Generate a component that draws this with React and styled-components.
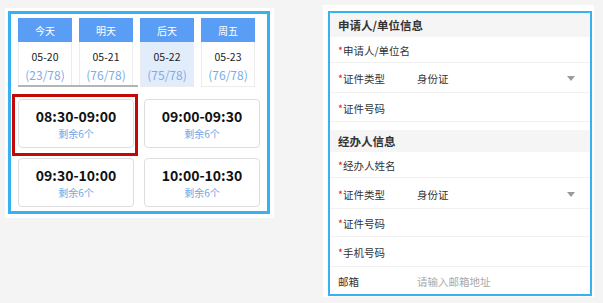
import styled, { createGlobalStyle } from "styled-components";

const GlobalStyle = createGlobalStyle`
  html, body {
    margin: 0;
    background: #f4f4f4;
    font-family: "Noto Sans CJK SC", "Noto Sans", sans-serif;
  }
`;

const days = [
  { label: "今天", date: "05-20", count: "(23/78)" },
  { label: "明天", date: "05-21", count: "(76/78)" },
  { label: "后天", date: "05-22", count: "(75/78)", active: true },
  { label: "周五", date: "05-23", count: "(76/78)" },
];

const slots = [
  { time: "08:30-09:00", left: 6, picked: true },
  { time: "09:00-09:30", left: 6 },
  { time: "09:30-10:00", left: 6 },
  { time: "10:00-10:30", left: 6 },
];

export default function App() {
  return (
    <Page>
      <GlobalStyle />
      <LeftCard>
        <Frame $w={262} $h={203} $bw={3}>
          <Booking>
            <TabsStrip>
              {days.map((d) => (
                <DayTab key={d.date}>
                  <DayHead>{d.label}</DayHead>
                  <DayBody $active={d.active}>
                    <DayDate>{d.date}</DayDate>
                    <DayCount>{d.count}</DayCount>
                  </DayBody>
                </DayTab>
              ))}
              <ScrollThumb />
            </TabsStrip>
            <SlotGrid>
              {slots.map((s) => (
                <Slot key={s.time} $picked={s.picked}>
                  <SlotTime>{s.time}</SlotTime>
                  <SlotLeft>剩余{s.left}个</SlotLeft>
                </Slot>
              ))}
            </SlotGrid>
          </Booking>
        </Frame>
      </LeftCard>

      <RightCard>
        <Frame $w={264} $h={285} $bw={2}>
          <SectionHead $h={24}>申请人/单位信息</SectionHead>
          <Row $h={26}>
            <Label required>申请人/单位名</Label>
          </Row>
          <Row $h={30}>
            <Label required>证件类型</Label>
            <Value>身份证</Value>
            <Caret />
          </Row>
          <Row $h={29}>
            <Label required>证件号码</Label>
          </Row>
          <Spacer />
          <SectionHead $h={22}>经办人信息</SectionHead>
          <Row $h={26}>
            <Label required>经办人姓名</Label>
          </Row>
          <Row $h={31}>
            <Label required>证件类型</Label>
            <Value>身份证</Value>
            <Caret />
          </Row>
          <Row $h={28}>
            <Label required>证件号码</Label>
          </Row>
          <Row $h={30}>
            <Label required>手机号码</Label>
          </Row>
          <Row $h={27} $last>
            <Label>邮箱</Label>
            <Value $placeholder>请输入邮箱地址</Value>
          </Row>
        </Frame>
      </RightCard>
    </Page>
  );
}

function Label({ required, children }) {
  return (
    <LabelText>
      {required && <Star>*</Star>}
      {children}
    </LabelText>
  );
}

const Page = styled.div`
  display: flex;
  align-items: flex-start;
  gap: 49px;
  padding-left: 5px;
`;

const LeftCard = styled.div`
  background: #fff;
  margin-top: 8px;
  padding: 3px 4px 4px 3px;
`;

const RightCard = styled.div`
  background: #fff;
  margin-top: 5px;
  padding: 6px 2px 1px 5px;
`;

const Frame = styled.div`
  box-sizing: border-box;
  width: ${(p) => p.$w}px;
  height: ${(p) => p.$h}px;
  border: ${(p) => p.$bw}px solid #38b1f0;
  overflow: hidden;
  background: #fff;
`;

const Booking = styled.div`
  padding: 4px 0 0 7px;
`;

const TabsStrip = styled.div`
  position: relative;
  display: flex;
  gap: 7px;
  width: max-content;
`;

const DayTab = styled.div`
  width: 54px;
  flex: none;
  display: flex;
  flex-direction: column;
`;

const DayHead = styled.div`
  height: 24px;
  background: #5a9df5;
  color: #fff;
  font-size: 10px;
  display: flex;
  align-items: center;
  justify-content: center;
`;

const DayBody = styled.div`
  box-sizing: border-box;
  height: 45px;
  padding-top: 7px;
  border: 1px solid #ececec;
  border-top: none;
  background: ${(p) => (p.$active ? "#e2edfc" : "#fff")};
  text-align: center;
`;

const DayDate = styled.div`
  font-size: 10.5px;
  line-height: 16px;
  color: #222;
`;

const DayCount = styled.div`
  font-size: 12px;
  line-height: 20px;
  color: #7cace6;
`;

const ScrollThumb = styled.div`
  position: absolute;
  left: 0;
  bottom: 0;
  width: 120px;
  height: 2px;
  background: #b4b4b4;
`;

const SlotGrid = styled.div`
  display: grid;
  grid-template-columns: 116px 116px;
  grid-auto-rows: 49px;
  column-gap: 10px;
  row-gap: 10px;
  margin-top: 12px;
`;

const Slot = styled.div`
  position: relative;
  box-sizing: border-box;
  border: 1px solid #dedede;
  border-radius: 4px;
  padding-top: 7px;
  text-align: center;
  &::after {
    content: "";
    display: ${(p) => (p.$picked ? "block" : "none")};
    position: absolute;
    top: -6px;
    left: -7px;
    right: -5px;
    bottom: -9px;
    border: 3px solid #c40808;
  }
`;

const SlotTime = styled.div`
  font-size: 14px;
  font-weight: 700;
  line-height: 18px;
  color: #111;
`;

const SlotLeft = styled.div`
  font-size: 10px;
  line-height: 14px;
  margin-top: 2px;
  color: #6ea6e6;
`;

const SectionHead = styled.div`
  height: ${(p) => p.$h}px;
  background: #f5f5f5;
  display: flex;
  align-items: center;
  padding-left: 8px;
  font-size: 11.5px;
  font-weight: 700;
  color: #333;
`;

const Spacer = styled.div`
  height: 8px;
`;

const Row = styled.div`
  box-sizing: border-box;
  height: ${(p) => p.$h}px;
  display: flex;
  align-items: center;
  padding: 2px 15px 0 8px;
  border-bottom: ${(p) => (p.$last ? "none" : "1px solid #f0f0f0")};
  font-size: 10.5px;
  color: #333;
`;

const LabelText = styled.div`
  width: 79px;
  flex: none;
  white-space: nowrap;
`;

const Star = styled.span`
  color: #e02020;
`;

const Value = styled.div`
  flex: 1;
  color: ${(p) => (p.$placeholder ? "#a9a9a9" : "#333")};
`;

const Caret = styled.div`
  width: 0;
  height: 0;
  border-left: 4px solid transparent;
  border-right: 4px solid transparent;
  border-top: 5px solid #9a9a9a;
`;
